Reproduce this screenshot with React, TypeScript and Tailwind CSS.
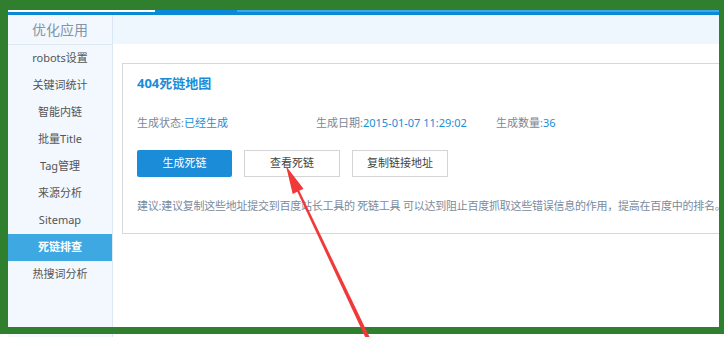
const menu = [
  "robots设置",
  "关键词统计",
  "智能内链",
  "批量Title",
  "Tag管理",
  "来源分析",
  "Sitemap",
  "死链排查",
  "热搜词分析",
];

const active = "死链排查";

export default function App() {
  return (
    <div className="relative h-[337px] w-[724px] overflow-hidden bg-white font-['Noto_Sans','Noto_Sans_CJK_SC',sans-serif]">
      <div className="flex h-full flex-col pl-[8px] pt-[10px]">
        {/* top tab strip */}
        <div className="flex h-[5px] shrink-0 flex-col">
          <div className="flex h-[2px]">
            <div className="w-[147px] bg-white" />
            <div className="w-[82px] bg-[#0a8ad6]" />
            <div className="flex-1 bg-[#3ea8e6]" />
          </div>
          <div className="h-[3px] bg-[#0a8ad6]" />
        </div>

        <div className="flex min-h-0 flex-1">
          <aside className="w-[105px] shrink-0 border-r border-[#dbe8f3] bg-[#f2f8fe]">
            <div className="flex h-[30px] items-center justify-center border-b border-[#dde8f1] text-[14px] text-[#8494a6]">
              优化应用
            </div>
            {menu.map((m) =>
              m === active ? (
                <div
                  key={m}
                  className="flex h-[27px] items-center justify-center bg-[#3ea8e2] text-[11px] font-bold text-white"
                >
                  {m}
                </div>
              ) : (
                <div
                  key={m}
                  className="flex h-[27px] items-center justify-center text-[11px] text-[#555]"
                >
                  {m}
                </div>
              )
            )}
          </aside>

          <main className="min-w-0 flex-1 overflow-hidden">
            <div className="h-[29px] bg-[#eef6fe]" />
            <div className="pl-[9px] pt-[19px]">
              <div className="w-[640px] whitespace-nowrap border border-[#d8d8d8] pb-[19px] pl-[14px] pt-[10px]">
                <h2 className="text-[13px] font-bold leading-[18px] text-[#1a8cd8]">404死链地图</h2>

                <div className="mt-[23px] flex text-[11px] leading-[16px] text-[#7b8794]">
                  <span className="w-[179px]">
                    生成状态:<span className="text-[#1a8cd8]">已经生成</span>
                  </span>
                  <span className="w-[180px]">
                    生成日期:<span className="text-[#1a8cd8]">2015-01-07 11:29:02</span>
                  </span>
                  <span>
                    生成数量:<span className="text-[#1a8cd8]">36</span>
                  </span>
                </div>

                <div className="mt-[19px] flex gap-[12px]">
                  <button className="h-[27px] w-[95px] rounded-[2px] bg-[#1a8cd8] text-[11px] text-white">
                    生成死链
                  </button>
                  <button className="h-[27px] w-[96px] border border-[#d4d4d4] bg-white text-[11px] text-[#444]">
                    查看死链
                  </button>
                  <button className="h-[27px] w-[96px] border border-[#d4d4d4] bg-white text-[11px] text-[#444]">
                    复制链接地址
                  </button>
                </div>

                <p className="mt-[21px] text-[11px] leading-[16px] tracking-[-0.25px] text-[#7a8a9c]">
                  建议:建议复制这些地址提交到百度站长工具的 死链工具 可以达到阻止百度抓取这些错误信息的作用，提高在百度中的排名。
                </p>
              </div>
            </div>
          </main>
        </div>
      </div>

      {/* green annotation frame */}
      <div className="pointer-events-none absolute left-0 top-0 h-[334px] w-[724px] border-b-[7px] border-l-[8px] border-r-[5px] border-t-[10px] border-solid border-[#2f7f2f]" />

      {/* red arrow */}
      <svg className="pointer-events-none absolute left-0 top-0" width="724" height="337" viewBox="0 0 724 337">
        <polygon points="286,166 292.7,194 303.5,188.7" fill="#f03a3a" />
        <polygon points="296.5,190 299.5,191 371,340 367,341" fill="#f03a3a" />
      </svg>
    </div>
  );
}
